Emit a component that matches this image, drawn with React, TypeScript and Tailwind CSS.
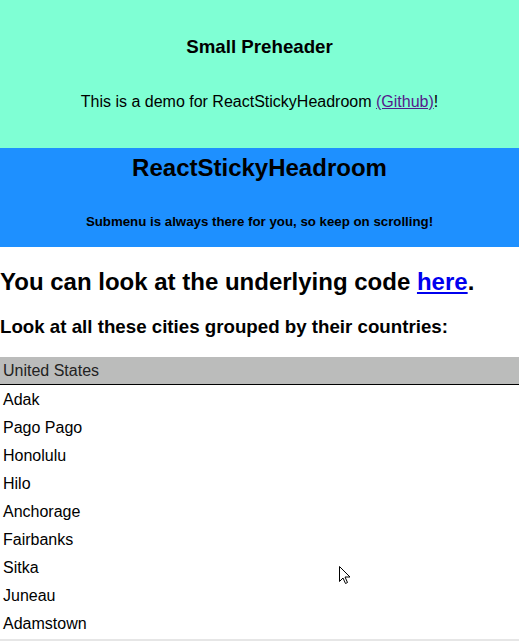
import React from "react";

const cities = ["Adak", "Pago Pago", "Honolulu", "Hilo", "Anchorage", "Fairbanks", "Sitka", "Juneau", "Adamstown"];

export default function App() {
  return (
    <div className="relative w-[519px] h-[642px] overflow-hidden bg-white text-black" style={{ fontFamily: '"Liberation Sans", Arial, sans-serif' }}>
      <div className="h-[148px] bg-[#7fffd4] flex flex-col items-center">
        <h3 className="mt-[36px] text-[18.72px] leading-[22px] font-bold">Small Preheader</h3>
        <p className="mt-[35px] text-[16px] leading-[18px]">
          This is a demo for ReactStickyHeadroom <a href="#" className="text-[#551a8b] underline">(Github)</a>!
        </p>
      </div>
      <div className="h-[99px] bg-[#1e90ff] flex flex-col items-center">
        <h2 className="mt-[6px] text-[24px] leading-[28px] font-bold">ReactStickyHeadroom</h2>
        <h5 className="mt-[32px] text-[13.28px] leading-[15px] font-bold">Submenu is always there for you, so keep on scrolling!</h5>
      </div>
      <h2 className="mt-[21px] text-[24px] leading-[28px] font-bold">
        You can look at the underlying code <a href="#" className="text-[#0000ee] underline">here</a>.
      </h2>
      <h3 className="mt-[20px] text-[18.72px] leading-[22px] font-bold">Look at all these cities grouped by their countries:</h3>
      <div className="mt-[19px] h-[28px] bg-[#bbbcbb] border-b border-black px-[3px] flex items-center text-[16px] text-[#222]">United States</div>
      <div>
        {cities.map((c) => (
          <div key={c} className="h-[28px] px-[3px] pt-[2px] flex items-center text-[16px]">{c}</div>
        ))}
      </div>
      <div className="mt-[2px] h-[2px] bg-[#e6e6e6]" />
      <svg className="absolute left-[339px] top-[566px]" width="12" height="19" viewBox="0 0 12 19">
        <path d="M0.5 0.5 L0.5 15.5 L4 12 L6.5 17.5 L8.5 16.5 L6 11 L11 11 Z" fill="white" stroke="black" strokeWidth="1" strokeLinejoin="miter" />
      </svg>
    </div>
  );
}
